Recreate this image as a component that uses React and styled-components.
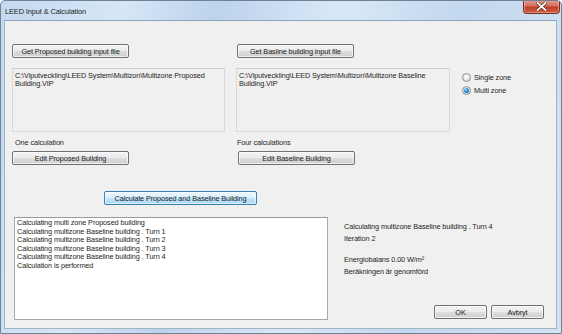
import React from "react";
import styled, { createGlobalStyle } from "styled-components";

const Global = createGlobalStyle`
  html, body { margin: 0; padding: 0; background: #fff; }
  body { font-family: "Liberation Sans", Arial, sans-serif; }
  * { box-sizing: border-box; }
`;

const Window = styled.div`
  width: 562px;
  height: 334px;
  display: flex;
  flex-direction: column;
  border: 1px solid #6f8196;
  border-radius: 5px 5px 0 0;
  background: linear-gradient(100deg, #c4d9ef 0%, #d6e6f6 20%, #bcd3ec 35%, #d9e8f7 55%, #c2d8ee 75%, #d2e3f4 100%);
  overflow: hidden;
`;

const TitleBar = styled.div`
  height: 19px;
  display: flex;
  align-items: flex-start;
  justify-content: space-between;
  padding-left: 4px;
  flex: none;
`;

const Title = styled.div`
  font-size: 7.4px;
  color: #1a1a1a;
  margin-top: 6px;
  letter-spacing: -0.1px;
`;

const CloseButton = styled.div`
  width: 37px;
  height: 14px;
  margin-right: 1px;
  margin-top: -1px;
  border: 1px solid #7a2a22;
  border-top: none;
  border-radius: 0 0 4px 4px;
  background: linear-gradient(#e3a192 0%, #d2705c 45%, #c0412a 55%, #cf5b3e 100%);
  box-shadow: inset 0 0 0 1px rgba(255, 255, 255, 0.35);
  display: flex;
  align-items: center;
  justify-content: center;
`;

const Client = styled.div`
  flex: 1;
  margin: 0 4px 4px 3px;
  border: 1px solid #a2b3c6;
  border-top-color: #8fa2b8;
  background: #f0f0f0;
  display: flex;
  flex-direction: column;
  font-size: 7.3px;
  color: #1e1e1e;
  letter-spacing: -0.1px;
`;

const TopArea = styled.div`
  display: flex;
  padding: 23px 0 0 7px;
`;

const Column = styled.div`
  width: ${(p) => p.$w}px;
  margin-right: ${(p) => p.$mr || 0}px;
  display: flex;
  flex-direction: column;
`;

const Button = styled.button`
  font: inherit;
  letter-spacing: inherit;
  color: #1a1a1a;
  width: ${(p) => p.$w}px;
  height: ${(p) => p.$h || 14}px;
  margin-left: ${(p) => p.$ml || 0}px;
  padding: 0;
  border: 1px solid ${(p) => (p.$focus ? "#3c7fb1" : "#707070")};
  border-radius: 2px;
  background: ${(p) =>
    p.$focus
      ? "linear-gradient(#eaf6fd 0%, #d9f0fc 48%, #bee6fd 52%, #a7d9f5 100%)"
      : "linear-gradient(#f2f2f2 0%, #ebebeb 48%, #dddddd 52%, #cfcfcf 100%)"};
  box-shadow: inset 0 0 0 1px ${(p) => (p.$focus ? "rgba(255,255,255,0.6)" : "rgba(255,255,255,0.7)")};
  display: flex;
  align-items: center;
  justify-content: center;
  flex: none;
`;

const PathBox = styled.div`
  margin-top: 10px;
  height: 64px;
  border: 1px solid #d9d9d9;
  border-top-color: #cfcfcf;
  background: #f0f0f0;
  padding: 3px 2px;
  line-height: 8.4px;
`;

const Label = styled.div`
  margin: 7px 0 4px ${(p) => p.$ml || 3}px;
  height: 8px;
  line-height: 8px;
`;

const RadioGroup = styled.div`
  display: flex;
  flex-direction: column;
  gap: 5px;
  padding-top: 29px;
`;

const RadioRow = styled.label`
  display: flex;
  align-items: center;
  gap: 3px;
  height: 8px;
`;

const RadioCircle = styled.span`
  width: 9px;
  height: 9px;
  border-radius: 50%;
  border: 1px solid #8e8f8f;
  background: radial-gradient(circle at 50% 40%, #ffffff 0%, #e6e6e6 55%, #c9c9c9 100%);
  display: flex;
  align-items: center;
  justify-content: center;
  &::after {
    content: "";
    display: ${(p) => (p.$on ? "block" : "none")};
    width: 5px;
    height: 5px;
    border-radius: 50%;
    background: radial-gradient(circle at 40% 35%, #9fe0ff 0%, #2a8fd6 45%, #0b4e8e 100%);
  }
`;

const CalcRow = styled.div`
  padding: 26px 0 0 99px;
`;

const BottomArea = styled.div`
  display: flex;
  padding: 12px 0 0 9px;
`;

const LogBox = styled.div`
  width: 314px;
  height: 103px;
  border: 1px solid #a8a8a8;
  border-top-color: #9a9a9a;
  background: #ffffff;
  padding: 1px 2px;
  line-height: 8.6px;
  flex: none;
`;

const StatusColumn = styled.div`
  display: flex;
  flex-direction: column;
  padding: 6px 0 0 16px;
  width: 215px;
`;

const StatusLine = styled.div`
  height: ${(p) => p.$h || 12}px;
  line-height: 8px;
`;

const ButtonRow = styled.div`
  display: flex;
  gap: 4px;
  margin-top: 25px;
  margin-left: 90px;
`;

const logLines = [
  "Calculating multi zone Proposed building",
  "Calculating multizone Baseline building . Turn 1",
  "Calculating multizone Baseline building . Turn 2",
  "Calculating multizone Baseline building . Turn 3",
  "Calculating multizone Baseline building . Turn 4",
  "Calculation is performed",
];

export default function App() {
  return (
    <>
      <Global />
      <Window>
        <TitleBar>
          <Title>LEED Input &amp; Calculation</Title>
          <CloseButton>
            <svg width="11" height="9" viewBox="0 0 11 9">
              <path d="M1.5 1 L9.5 8 M9.5 1 L1.5 8" stroke="#5a1a10" strokeWidth="3" strokeLinecap="square" />
              <path d="M1.5 1 L9.5 8 M9.5 1 L1.5 8" stroke="#ffffff" strokeWidth="1.8" strokeLinecap="square" />
            </svg>
          </CloseButton>
        </TitleBar>
        <Client>
          <TopArea>
            <Column $w={213} $mr={11}>
              <Button $w={117}>Get Proposed building input file</Button>
              <PathBox>
                C:\Viputveckling\LEED System\Multizon\Multizone Proposed
                <br />
                Building.VIP
              </PathBox>
              <Label>One calculation</Label>
              <Button $w={117}>Edit Proposed Building</Button>
            </Column>
            <Column $w={214} $mr={12}>
              <Button $w={117} $ml={1}>Get Basline building input file</Button>
              <PathBox>
                C:\Viputveckling\LEED System\Multizon\Multizone Baseline
                <br />
                Building.VIP
              </PathBox>
              <Label $ml={1}>Four calculations</Label>
              <Button $w={117} $ml={2}>Edit Baseline Building</Button>
            </Column>
            <RadioGroup>
              <RadioRow>
                <RadioCircle />
                Single zone
              </RadioRow>
              <RadioRow>
                <RadioCircle $on />
                Multi zone
              </RadioRow>
            </RadioGroup>
          </TopArea>
          <CalcRow>
            <Button $w={153} $h={14} $focus>Calculate Proposed and Baseline Building</Button>
          </CalcRow>
          <BottomArea>
            <LogBox>
              {logLines.map((l) => (
                <div key={l}>{l}</div>
              ))}
            </LogBox>
            <StatusColumn>
              <StatusLine>Calculating multizone Baseline building . Turn 4</StatusLine>
              <StatusLine $h={21}>Iteration 2</StatusLine>
              <StatusLine>Energiobalans 0.00 W/m²</StatusLine>
              <StatusLine>Beräkningen är genomförd</StatusLine>
              <ButtonRow>
                <Button $w={53}>OK</Button>
                <Button $w={53}>Avbryt</Button>
              </ButtonRow>
            </StatusColumn>
          </BottomArea>
        </Client>
      </Window>
    </>
  );
}
